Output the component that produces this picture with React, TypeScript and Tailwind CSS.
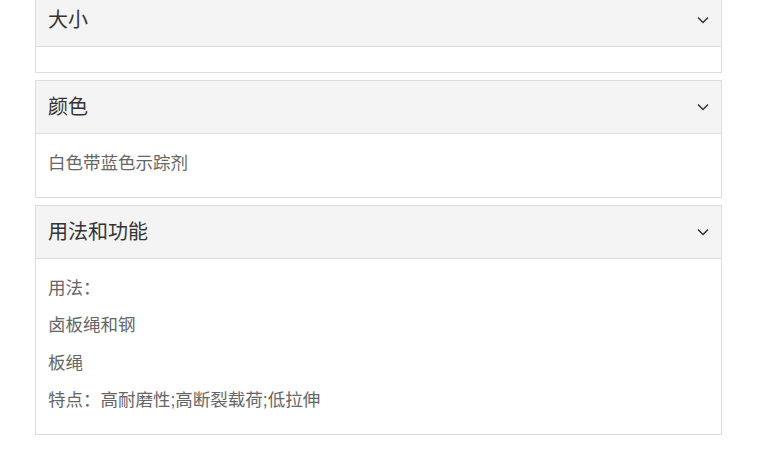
const sections = [
  { title: '大小', lines: [] as string[] },
  { title: '颜色', lines: ['白色带蓝色示踪剂'] },
  { title: '用法和功能', lines: ['用法：', '卤板绳和钢', '板绳', '特点：高耐磨性;高断裂载荷;低拉伸'] },
]

function Chevron() {
  return (
    <svg width="12" height="8" viewBox="0 0 12 8" fill="none" className="text-[#333]">
      <polyline points="1,1.5 6,6.5 11,1.5" stroke="currentColor" strokeWidth="1.5" />
    </svg>
  )
}

export default function App() {
  return (
    <div
      className="w-[762px] h-[466px] overflow-hidden bg-white pl-[35px] pr-[40px]"
      style={{ fontFamily: '"Liberation Sans", "Noto Sans CJK SC", sans-serif' }}
    >
      <div className="flex flex-col gap-[7px] mt-[-7px]">
        {sections.map((s) => (
          <div key={s.title} className="border border-[#dddddd] bg-white">
            <div className="h-[53px] bg-[#f4f4f4] border-b border-[#dddddd] flex items-center justify-between pl-[12px] pr-[12px]">
              <span className="text-[20px] text-[#333]">{s.title}</span>
              <Chevron />
            </div>
            <div className="pt-[11px] pb-[14px] px-[12px]">
              {s.lines.map((l) => (
                <p key={l} className="text-[17.5px] leading-[37.5px] text-[#666]">{l}</p>
              ))}
            </div>
          </div>
        ))}
      </div>
    </div>
  )
}
